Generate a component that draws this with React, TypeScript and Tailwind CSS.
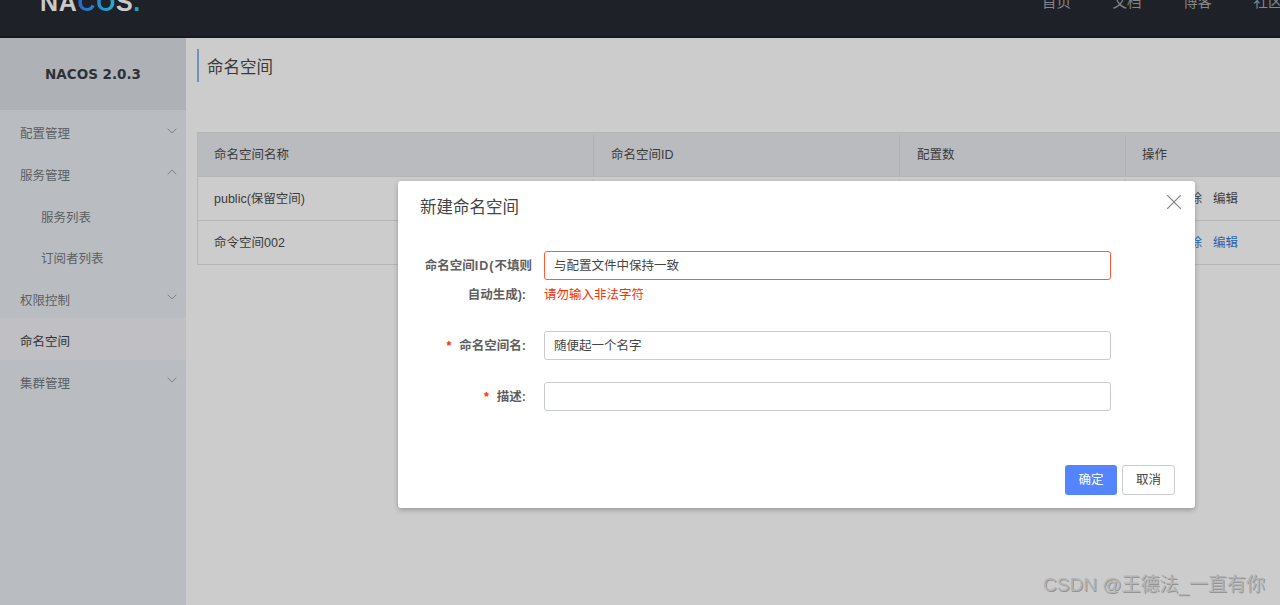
import React from "react";
import { ChevronDown, ChevronUp, X } from "lucide-react";

const font = { fontFamily: '"Liberation Sans","Noto Sans CJK SC",sans-serif' };

function MenuItem({ label, icon, sub, active }: { label: string; icon?: "down" | "up"; sub?: boolean; active?: boolean }) {
  return (
    <div className={`flex h-[41.6px] items-center justify-between pt-[8px] pr-[6px] text-[12.5px] ${sub ? "pl-[41px]" : "pl-[20px]"} ${active ? "bg-[#c0bfc3] text-[#333333]" : "text-[#5c5f62]"}`}>
      <span>{label}</span>
      {icon === "down" && <ChevronDown size={16} strokeWidth={1.3} className="mb-[8px] text-[#74787c]" />}
      {icon === "up" && <ChevronUp size={16} strokeWidth={1.3} className="mb-[8px] text-[#74787c]" />}
    </div>
  );
}

function Row({ name, link }: { name: string; link?: boolean }) {
  const c = link ? "text-[#2a62b0]" : "text-[#3c3c40]";
  return (
    <div className="flex h-[44px] border-b border-[#b4b5b8] pt-[2px] text-[12.5px] text-[#3a3a3a]">
      <div className="flex w-[396px] items-center border-r border-[#bdbdc0] pl-[16px]">{name}</div>
      <div className="w-[306px] border-r border-[#bdbdc0]" />
      <div className="w-[226px] border-r border-[#bdbdc0]" />
      <div className={`flex flex-1 items-center gap-[11px] pl-[51px] ${c}`}>
        <span>删除</span>
        <span>编辑</span>
      </div>
    </div>
  );
}

function Field({ children, label, required }: { children: React.ReactNode; label: string; required?: boolean }) {
  return (
    <div className="flex items-center">
      <div className="w-[128px] pt-[2px] text-right text-[12.5px] font-bold text-[#5f5f5f]">
        {required && <span className="mr-[8px] text-[#ff3000]">*</span>}
        {label}
      </div>
      {children}
    </div>
  );
}

export default function App() {
  return (
    <div style={font} className="relative h-[605px] w-[1280px] overflow-hidden bg-[#cccccc]">
      <header className="flex h-[38px] items-end justify-between overflow-hidden border-b-2 border-[#16181c] bg-[#1e2127] pb-[27px]">
        <div className="pl-[40px] text-[25px] leading-[14px] font-bold tracking-[0.6px] text-[#c9cacb]" style={{ fontFamily: '"Liberation Sans",sans-serif' }}>
          NA<span className="bg-gradient-to-r from-[#2a62c8] to-[#25b0c8] bg-clip-text text-transparent">CO</span>S<span className="text-[#1fa8b8]">.</span>
        </div>
        <nav className="flex w-[238px] gap-[41.5px] text-[14.5px] leading-[14px] whitespace-nowrap text-[#85878a]">
          <span>首页</span>
          <span>文档</span>
          <span>博客</span>
          <span>社区</span>
        </nav>
      </header>

      <div className="flex h-[567px]">
        <aside className="w-[186px] shrink-0 bg-[#b9bdc1]">
          <div className="flex h-[72px] items-center justify-center bg-[#aeb1b5] font-bold text-[#2e3238]" style={{ fontFamily: '"DejaVu Sans",sans-serif' }}>
            <span className="text-[13.5px]">NACOS 2.0.3</span>
          </div>
          <div>
            <MenuItem label="配置管理" icon="down" />
            <MenuItem label="服务管理" icon="up" />
            <MenuItem label="服务列表" sub />
            <MenuItem label="订阅者列表" sub />
            <MenuItem label="权限控制" icon="down" />
            <MenuItem label="命名空间" active />
            <MenuItem label="集群管理" icon="down" />
          </div>
        </aside>

        <main className="min-w-0 flex-1 pt-[11px] pl-[11px]">
          <div className="flex h-[33px] w-fit items-center border-l-2 border-[#6f93b8] pt-[4px] pl-[8px] text-[16.5px] text-[#3a3a3a]">命名空间</div>
          <div className="mt-[50px] w-[1100px] border-t border-l border-[#b4b5b8]">
            <div className="flex h-[44px] border-b border-[#b4b5b8] bg-[#babbbf] pt-[2px] text-[12.5px] text-[#3a3a3a]">
              <div className="flex w-[396px] items-center border-r border-[#b0b1b5] pl-[16px]">命名空间名称</div>
              <div className="flex w-[306px] items-center border-r border-[#b0b1b5] pl-[17px]">命名空间ID</div>
              <div className="flex w-[226px] items-center border-r border-[#b0b1b5] pl-[17px]">配置数</div>
              <div className="flex flex-1 items-center pl-[16px]">操作</div>
            </div>
            <Row name="public(保留空间)" />
            <Row name="命令空间002" link />
          </div>
        </main>
      </div>

      <div className="absolute top-[181px] left-[398px] h-[327px] w-[797px] rounded-[3px] bg-white shadow-[0_2px_5px_rgba(0,0,0,0.25)]">
        <X size={26} strokeWidth={1} className="absolute top-[8px] right-[8px] text-[#8a8a8a]" />
        <div className="pt-[14px] pl-[22px] text-[16.5px] leading-[24px] text-[#444444]">新建命名空间</div>
        <div className="flex flex-col pt-[32px]">
          <div className="flex">
            <div className="w-[128px] shrink-0 pt-[1px] text-right text-[12.5px] leading-[29px] font-bold whitespace-nowrap text-[#5f5f5f]">
              <div className="-mr-[6px]">命名空间<span className="tracking-[1px]">ID(</span>不填则</div>
              <div>自动生成):</div>
            </div>
            <div className="ml-[18px]">
              <div className="flex h-[29px] w-[567px] items-center rounded-[3px] border border-[#ff5a35] px-[9px] pt-[2px] text-[12.5px] text-[#444444]">与配置文件中保持一致</div>
              <div className="pt-[7px] text-[12.5px] leading-[16px] text-[#ff3000]">请勿输入非法字符</div>
            </div>
          </div>
          <div className="mt-[21px]">
            <Field label="命名空间名:" required>
              <div className="ml-[18px] flex h-[29px] w-[567px] items-center rounded-[3px] border border-[#c8cbd2] px-[9px] pt-[2px] text-[12.5px] text-[#444444]">随便起一个名字</div>
            </Field>
          </div>
          <div className="mt-[22px]">
            <Field label="描述:" required>
              <div className="ml-[18px] h-[29px] w-[567px] rounded-[3px] border border-[#c8cbd2]" />
            </Field>
          </div>
        </div>
        <div className="mt-[54px] flex justify-end gap-[5px] pr-[20px]">
          <button className="h-[30px] w-[52px] rounded-[3px] bg-[#5584ff] pt-[1px] text-[12.5px] text-white">确定</button>
          <button className="h-[30px] w-[53px] rounded-[3px] border border-[#c8cbd2] bg-white pt-[1px] text-[12.5px] text-[#444444]">取消</button>
        </div>
      </div>

      <div className="absolute top-[572px] right-[15px] text-[19px] leading-[26px] whitespace-nowrap text-[#b4b4b4] [text-shadow:1px_1px_0_rgba(100,100,100,0.55)]">
        CSDN @王德法_一直有你
      </div>
    </div>
  );
}
